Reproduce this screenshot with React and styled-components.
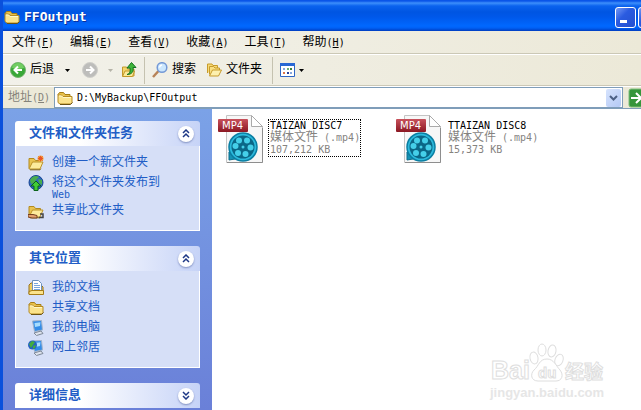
import { useId, useState } from "react";
import styled, { createGlobalStyle, css } from "styled-components";

const GlobalStyle = createGlobalStyle`
    * {
        box-sizing: border-box;
    }
    body {
        margin: 0;
        overflow: hidden;
        background: #fff;
    }
    button, input {
        font: inherit;
        color: inherit;
        padding: 0;
        border: 0;
        background: none;
    }
`;

const Window = styled.div`
    display: flex;
    flex-direction: column;
    height: 100vh;
    border-left: 3px solid #0a50dc;
    font-family: "Liberation Mono", "Noto Sans CJK SC", monospace;
    font-size: 12px;
    line-height: 12px;
    color: #000;
    white-space: nowrap;
    overflow: hidden;
`;

// latin characters are half as wide as the chinese ones
const Half = styled.span`
    font-family: "DejaVu Sans Mono", monospace;
    font-size: 10px;
    line-height: 8px;
`;

const TitleBar = styled.header`
    display: flex;
    flex: none;
    align-items: center;
    gap: 4px;
    height: 31px;
    margin-left: -3px;
    padding: 3px 0 0 4px;
    background: linear-gradient(
        #0a55e8 0,
        #0a55e8 1px,
        #3d8ffb 3px,
        #0a62ee 6px,
        #0055e2 12px,
        #0058ea 17px,
        #0068ff 26px,
        #0060f5 28px,
        #003dc0 31px
    );
`;

const Title = styled.h1`
    flex: 1;
    margin: 0;
    font-family: "DejaVu Sans Mono", monospace;
    font-size: 13px;
    line-height: 16px;
    color: #fff;
    text-shadow: 1px 1px #0b2f9c;
`;

const WindowControls = styled.div`
    display: flex;
    gap: 2px;
    width: 26px;
    overflow: hidden;
`;

const WindowButton = styled.button`
    display: flex;
    flex: none;
    width: 21px;
    height: 21px;
    border: 1px solid #fff;
    border-radius: 3px;
    background: linear-gradient(135deg, #7599f5, #2a5be0 40%, #2450d0);
`;

const MenuBar = styled.nav`
    display: flex;
    flex: none;
    gap: 16px;
    height: 23px;
    padding: 1px 9px 0;
    background: linear-gradient(90deg, #f3f2ec, #ece9d8);
    border-bottom: 1px solid #cbc8b6;
`;

const MenuButton = styled.button`
    height: 22px;
`;

const ToolBar = styled.div`
    display: flex;
    flex: none;
    align-items: center;
    height: 32px;
    padding-left: 7px;
    background: linear-gradient(90deg, #f2f1ea, #ece9d8);
    border-top: 1px solid #fff;
    border-bottom: 1px solid #cbc8b6;
`;

const ToolButton = styled.button`
    display: flex;
    align-items: center;
    gap: 4px;
    height: 24px;
    margin-right: ${(p) => p.$after || 0}px;
`;

const Divider = styled.div`
    width: 1px;
    height: 27px;
    margin-right: 7px;
    background: #c5c2b0;
`;

const AddressBar = styled.div`
    display: flex;
    flex: none;
    align-items: center;
    height: 22px;
    padding-left: 5px;
    background: #ece9d8;
    border-top: 1px solid #fff;
`;

const AddressLabel = styled.label`
    width: 46px;
    color: #85837a;
`;

const AddressBox = styled.div`
    display: flex;
    flex: 1;
    align-items: center;
    gap: 4px;
    height: 21px;
    padding: 0 1px 0 2px;
    background: #fff;
    border: 1px solid #7f9db9;
`;

const AddressInput = styled.input`
    flex: 1;
    min-width: 0;
    font-family: "DejaVu Sans Mono", monospace;
    font-size: 10px;
    outline: none;
`;

const DropButton = styled.button`
    display: flex;
    align-items: center;
    justify-content: center;
    width: 15px;
    height: 18px;
    border-radius: 2px;
    background: linear-gradient(135deg, #d6e3fd, #b4c9f5);
`;

const GoButton = styled.button`
    width: 18px;
    height: 20px;
    overflow: hidden;
`;

const Content = styled.div`
    display: flex;
    flex: 1;
    min-height: 0;
    border-top: 1px solid #7f9db9;
`;

const Sidebar = styled.aside`
    display: flex;
    flex: none;
    flex-direction: column;
    gap: 15px;
    width: 209px;
    padding: 12px;
    background: linear-gradient(#7ba2e7, #6a80d8);
    overflow: hidden;
`;

const Panel = styled.section`
    flex: none;
`;

const PanelHeader = styled.h2`
    display: flex;
    align-items: center;
    justify-content: space-between;
    height: 25px;
    margin: 0;
    padding: 0 6px 0 14px;
    border-radius: 3px 3px 0 0;
    background: linear-gradient(90deg, #fff 35%, #c6d3f7);
    color: #215dc6;
    font-size: 13px;
    line-height: 16px;
`;

const PanelToggle = styled.button`
    display: flex;
    align-items: center;
    justify-content: center;
    width: 16px;
    height: 16px;
    border-radius: 50%;
    background: #fff;
    box-shadow: 0 1px 2px #8090c0;
`;

const TaskList = styled.ul`
    margin: 0;
    padding: 7px 12px 9px;
    list-style: none;
    background: #d6dff7;
    border: 1px solid #fff;
    border-top: 0;
`;

const TaskLink = styled.a`
    display: flex;
    align-items: flex-start;
    gap: 8px;
    color: #215dc6;
    text-decoration: none;
    white-space: normal;

    svg {
        margin: 2px 0;
    }
`;

const TaskText = styled.span`
    width: 110px;
    padding-top: 4px;
`;

const Files = styled.main`
    position: relative;
    display: grid;
    flex: 1;
    grid-template-columns: repeat(auto-fill, 178px);
    align-content: start;
    padding: 5px 6px;
    background: #fff;
`;

const FileTile = styled.div`
    display: flex;
    align-items: flex-start;
    gap: 4px;
`;

const FileText = styled.div`
    margin-top: 5px;
    padding: 0 0 0 1px;
    border: 1px dotted transparent;
    color: #85837f;
    ${(p) =>
        p.$focused &&
        css`
            border-color: #000;
        `}
`;

const FileLine = styled.div`
    height: 12px;
    color: ${(p) => (p.$name ? "#000" : "inherit")};
`;

const Watermark = styled.div`
    position: absolute;
    right: 32px;
    bottom: 9px;
    pointer-events: none;

    svg {
        display: block;
    }
`;

const FolderIcon = ({ size = 16 }) => (
    <svg width={size} height={size} viewBox="0 0 16 16">
        <path d="M1 4.5 2.5 2.5h4L8 4.5h5v3" fill="#e9c14a" stroke="#a57c17" />
        <path d="M1 4.5v8l2 1.5h10.5l1.5-1.5V6.5H6L4.5 5H1z" fill="#fbe38c" stroke="#b58a20" />
        <path d="M2 6h2.5L6 7.5h8" fill="none" stroke="#fff7cc" />
        <path d="M3 14.5h10.5l2-2" fill="none" stroke="#6b5314" />
    </svg>
);

const OpenFolder = () => (
    <>
        <path d="M1 13.5v-10h5l1.5 2h5v3" fill="#e9c350" stroke="#b38a1f" />
        <path d="M1 14 4.5 7H15l-3 7z" fill="#fdeb9c" stroke="#bb9228" />
        <path d="M2 14.8h10l1-1" fill="none" stroke="#856516" />
    </>
);

const OpenFolderIcon = () => (
    <svg width="16" height="16" viewBox="0 0 16 16">
        <path d="M1.5 11V2h4.5l1 1.5h4.5V6" fill="#f7da74" stroke="#c79b2b" />
        <path d="M3.5 12.5v-8h4l1.5 1.5h4.5v2" fill="#f9df82" stroke="#c79b2b" />
        <path d="M3.5 14 6.5 8h9l-3 6z" fill="#fdf0ae" stroke="#c79b2b" />
    </svg>
);

const NewFolderIcon = () => (
    <svg width="16" height="16" viewBox="0 0 16 16">
        <OpenFolder />
        <circle cx="12.5" cy="3.5" r="3" fill="#f6a33c" />
        <path d="m10.500 1.500 4 4M14.500 1.500l-4 4M12.500 1v5M10 3.500h5" stroke="#e8562a" />
    </svg>
);

const PublishIcon = () => (
    <svg width="16" height="16" viewBox="0 0 16 16">
        <circle cx="8" cy="7.5" r="7" fill="#2c65c4" stroke="#184690" />
        <path d="M2 5C4 1 8 0 11 2L8 5 6 8 3 9zM10 4l4 1v5l-3-2z" fill="#49ad4d" />
        <path d="m8 6 5 5h-3v4.5H6V11H3z" fill="#42cc35" stroke="#0b641c" />
    </svg>
);

const ShareIcon = () => (
    <svg width="16" height="16" viewBox="0 0 16 16">
        <OpenFolder />
        <path d="M0 11.5h5l4 1V15H4l-4-1z" fill="#e2a06e" stroke="#75401f" />
        <path d="M12 11h3v3.5h-4" fill="none" stroke="#444" strokeWidth="1.5" />
    </svg>
);

const DocumentsIcon = () => (
    <svg width="16" height="16" viewBox="0 0 16 16">
        <path d="M1 14V5l2-2h4v3h7l1 1v7z" fill="#edcc62" stroke="#9a731a" />
        <path d="M4.5 11.5V.5h6l3 3v8z" fill="#fff" stroke="#6d91bd" />
        <path d="M6 3.5h4M6 5.5h6M6 7.5h6M6 9.5h6" stroke="#78a5dd" />
        <path d="M1 14.5v-3l3-1h11.5v4z" fill="#fbe38c" stroke="#a57c17" />
    </svg>
);

const Screen = () => (
    <>
        <path d="m4.500 1 9-.5 1 9.500-8 1.500z" fill="#338ce8" stroke="#a4b4ca" />
        <path d="m6.500 3 6-.8L12 6 7 7z" fill="#a5dcff" />
        <path d="m6 13 7-2 2 2.500-6.500 2z" fill="#dfe4ed" stroke="#7d8898" />
    </>
);

const ComputerIcon = () => (
    <svg width="16" height="16" viewBox="0 0 16 16">
        <Screen />
    </svg>
);

const NetworkIcon = () => (
    <svg width="16" height="16" viewBox="0 0 16 16">
        <Screen />
        <circle cx="4.5" cy="5" r="4.5" fill="#2562c2" />
        <path d="M1 4 4 1l3 1-2 3-2 3zM5 6l3-1-1 3-2 1z" fill="#42ad3e" />
    </svg>
);

const BackIcon = () => (
    <svg width="16" height="16" viewBox="0 0 16 16">
        <circle cx="8" cy="8" r="7.5" fill="#39a838" stroke="#75b56f" />
        <path d="M2 6a6 5 0 0 1 12 0Q8 8 2 6z" fill="#72cd62" />
        <path d="M12 8H5M8 4.500 4.500 8 8 11.500" fill="none" stroke="#fff" strokeWidth="2" />
    </svg>
);

const ForwardIcon = () => (
    <svg width="16" height="16" viewBox="0 0 16 16">
        <circle cx="8" cy="8" r="7.5" fill="#bdbdbb" stroke="#cfcfcb" />
        <path d="M4 8h7M8 4.500 11.500 8 8 11.500" fill="none" stroke="#fff" strokeWidth="2" />
    </svg>
);

const UpIcon = () => (
    <svg width="16" height="16" viewBox="0 0 16 16">
        <path d="M1.5 14V5h4l1 2H13v7z" fill="#f4d56b" stroke="#c2982a" />
        <path d="M1.5 14.500 4 9h9.500l-2 5.500z" fill="#fbe998" stroke="#c2982a" />
        <path d="M6 12.500C9 12 9.500 9 9 6H6L10.500.5 15 5.500h-3c.8 4-1 7-6 7z" fill="#3eb53a" stroke="#157121" />
    </svg>
);

const SearchIcon = () => (
    <svg width="16" height="16" viewBox="0 0 16 16">
        <path d="m1 15 5.500-6" stroke="#b78358" strokeWidth="2.5" />
        <circle cx="10" cy="5.5" r="4.8" fill="#cce7fd" stroke="#7499d6" strokeWidth="1.5" />
        <path d="M7.500 5.500A3 3 0 0 1 10 3" fill="none" stroke="#fff" strokeWidth="1.5" />
    </svg>
);

const ViewsIcon = () => (
    <svg width="15" height="14" viewBox="0 0 15 14">
        <path d="M.5.5h14v13H.5z" fill="#fff" stroke="#2f66c5" />
        <path d="M0 0h15v3H0z" fill="#2968d4" />
        <path d="M3 5h2v2H3zM10 9h2v2h-2z" fill="#88a7df" />
        <path d="M7 5h2v2H7z" fill="#6bae74" />
        <path d="M10 5h2v2h-2z" fill="#3e803e" />
        <path d="M3 9h2v2H3z" fill="#dc7448" />
        <path d="M7 9h2v2H7z" fill="#263f99" />
    </svg>
);

const Caret = ({ color = "#000" }) => (
    <svg width="5" height="3" viewBox="0 0 5 3">
        <path d="M0 0h5L2.500 3z" fill={color} />
    </svg>
);

const Chevrons = ({ down }) => (
    <svg width="8" height="9" viewBox="0 0 8 9">
        <path
            d={down ? "m1 1 3 3 3-3M1 5l3 3 3-3" : "m1 4 3-3 3 3M1 8l3-3 3 3"}
            fill="none"
            stroke="#1d3785"
            strokeWidth="1.5"
        />
    </svg>
);

const Mp4Icon = () => {
    const id = useId();
    return (
        <svg width="46" height="50" viewBox="0 0 46 50">
            <defs>
                <linearGradient id={id} x2="0" y2="1">
                    <stop stopColor="#c8515b" />
                    <stop offset="1" stopColor="#8b1722" />
                </linearGradient>
            </defs>
            <path d="M8.5 1.5h25l11 11v36h-36z" fill="#f7f7f7" stroke="#c4c4c4" />
            <path d="M9 48.5h35.5V14" fill="none" stroke="#8e8e8e" />
            <path d="M33.500 1.500v11h11z" fill="#fff" stroke="#aaa" />
            <path d="M11 38v8l6-1z" fill="#1592b4" stroke="#0b6d8c" />
            <circle cx="25" cy="33" r="14" fill="#2cb9dc" stroke="#0a7ea2" strokeWidth="1.5" />
            <circle cx="25" cy="33" r="11.5" fill="#0b6787" />
            <g fill="#45cfe9">
                <circle cx="21" cy="26.5" r="3" />
                <circle cx="29" cy="26.500" r="3" />
                <circle cx="32.5" cy="33.5" r="3" />
                <circle cx="27.5" cy="40" r="3" />
                <circle cx="20" cy="39" r="3" />
                <circle cx="17.5" cy="32" r="3" />
                <circle cx="25" cy="33" r="1.5" />
            </g>
            <rect y="5" width="30" height="13" rx="1" fill={`url(#${id})`} />
            <text x="4" y="15" fill="#fff" fontFamily="DejaVu Sans, sans-serif" fontSize="10">
                MP4
            </text>
        </svg>
    );
};

const BaiduMark = () => (
    <svg width="120" height="60" viewBox="0 0 120 60">
        <g fill="#fff" stroke="#dedede" fontFamily="Liberation Sans, sans-serif" fontWeight="bold">
            <text x="2" y="38" fontSize="25">Bai</text>
            <ellipse cx="45" cy="17" rx="4" ry="6" transform="rotate(-12 45 17)" />
            <ellipse cx="53" cy="9" rx="4" ry="6" />
            <ellipse cx="63" cy="10" rx="4" ry="6" transform="rotate(10 63 10)" />
            <ellipse cx="70" cy="19" rx="4" ry="6" transform="rotate(20 70 19)" />
            <path d="M58 18c7 0 9 7 13 11 4 5 2 11-4 11H49c-7 0-8-7-4-11 5-4 5-11 13-11z" />
            <text x="49" y="37" fontSize="15">du</text>
            <text x="76" y="38" fontFamily="Noto Sans CJK SC, sans-serif" fontSize="19">经验</text>
        </g>
        <text x="1" y="56" fill="#e6e6e6" fontFamily="Liberation Sans, sans-serif" fontSize="13" fontWeight="bold">
            jingyan.baidu.com
        </text>
    </svg>
);

const menus = [
    ["文件", "F"],
    ["编辑", "E"],
    ["查看", "V"],
    ["收藏", "A"],
    ["工具", "T"],
    ["帮助", "H"],
];

const panels = [
    {
        title: "文件和文件夹任务",
        items: [
            { icon: <NewFolderIcon />, text: "创建一个新文件夹" },
            {
                icon: <PublishIcon />,
                text: (
                    <>
                        将这个文件夹发布到 <Half>Web</Half>
                    </>
                ),
            },
            { icon: <ShareIcon />, text: "共享此文件夹" },
        ],
    },
    {
        title: "其它位置",
        items: [
            { icon: <DocumentsIcon />, text: "我的文档" },
            { icon: <FolderIcon />, text: "共享文档" },
            { icon: <ComputerIcon />, text: "我的电脑" },
            { icon: <NetworkIcon />, text: "网上邻居" },
        ],
    },
    { title: "详细信息", closed: true, items: [] },
];

const files = [
    { name: "TAIZAN_DISC7", size: "107,212 KB" },
    { name: "TTAIZAN DISC8", size: "15,373 KB" },
];

const SidePanel = ({ title, items, closed }) => {
    const [open, setOpen] = useState(!closed);
    return (
        <Panel>
            <PanelHeader>
                {title}
                <PanelToggle aria-label={title} aria-expanded={open} onClick={() => setOpen(!open)}>
                    <Chevrons down={!open} />
                </PanelToggle>
            </PanelHeader>
            {open && (
                <TaskList>
                    {items.map((item, i) => (
                        <li key={i}>
                            <TaskLink href="#">
                                {item.icon}
                                <TaskText>{item.text}</TaskText>
                            </TaskLink>
                        </li>
                    ))}
                </TaskList>
            )}
        </Panel>
    );
};

const App = () => {
    const [path, setPath] = useState("D:\\MyBackup\\FFOutput");
    const [selected, setSelected] = useState(0);

    return (
        <Window>
            <GlobalStyle />
            <TitleBar>
                <FolderIcon />
                <Title>FFOutput</Title>
                <WindowControls>
                    <WindowButton aria-label="最小化">
                        <svg width="19" height="19">
                            <path d="M4 12h7v3H4z" fill="#fff" />
                        </svg>
                    </WindowButton>
                    <WindowButton aria-label="最大化" />
                </WindowControls>
            </TitleBar>
            <MenuBar>
                {menus.map(([label, key]) => (
                    <MenuButton key={key}>
                        {label}
                        <Half>
                            (<u>{key}</u>)
                        </Half>
                    </MenuButton>
                ))}
            </MenuBar>
            <ToolBar>
                <ToolButton $after={11}>
                    <BackIcon />
                    后退
                </ToolButton>
                <ToolButton aria-label="后退列表" $after={12}>
                    <Caret />
                </ToolButton>
                <ToolButton aria-label="前进" $after={10}>
                    <ForwardIcon />
                </ToolButton>
                <ToolButton aria-label="前进列表" $after={8}>
                    <Caret color="#b5b3a8" />
                </ToolButton>
                <ToolButton aria-label="向上" $after={7}>
                    <UpIcon />
                </ToolButton>
                <Divider />
                <ToolButton $after={10}>
                    <SearchIcon />
                    搜索
                </ToolButton>
                <ToolButton $after={10}>
                    <OpenFolderIcon />
                    文件夹
                </ToolButton>
                <Divider />
                <ToolButton aria-label="查看">
                    <ViewsIcon />
                    <Caret />
                </ToolButton>
            </ToolBar>
            <AddressBar>
                <AddressLabel htmlFor="address">
                    地址
                    <Half>
                        (<u>D</u>)
                    </Half>
                </AddressLabel>
                <AddressBox>
                    <FolderIcon />
                    <AddressInput id="address" value={path} onChange={(e) => setPath(e.target.value)} />
                    <DropButton aria-label="地址列表">
                        <svg width="9" height="6" viewBox="0 0 9 6">
                            <path d="m1 1 3.500 3.500L8 1" fill="none" stroke="#4d6185" strokeWidth="2" />
                        </svg>
                    </DropButton>
                </AddressBox>
                <GoButton aria-label="转到">
                    <svg width="18" height="20" viewBox="0 0 18 20">
                        <rect x="6" y="1" width="18" height="18" rx="2" fill="#35953b" stroke="#7fbd7c" />
                        <path d="M8 10h12M13 5l5 5-5 5" fill="none" stroke="#fff" strokeWidth="2" />
                    </svg>
                </GoButton>
            </AddressBar>
            <Content>
                <Sidebar>
                    {panels.map((panel) => (
                        <SidePanel key={panel.title} {...panel} />
                    ))}
                </Sidebar>
                <Files>
                    {files.map((file, i) => (
                        <FileTile key={file.name} onClick={() => setSelected(i)}>
                            <Mp4Icon />
                            <FileText $focused={i === selected}>
                                <FileLine $name>
                                    <Half>{file.name}</Half>
                                </FileLine>
                                <FileLine>
                                    媒体文件<Half> (.mp4)</Half>
                                </FileLine>
                                <FileLine>
                                    <Half>{file.size}</Half>
                                </FileLine>
                            </FileText>
                        </FileTile>
                    ))}
                    <Watermark>
                        <BaiduMark />
                    </Watermark>
                </Files>
            </Content>
        </Window>
    );
};

export default App;
